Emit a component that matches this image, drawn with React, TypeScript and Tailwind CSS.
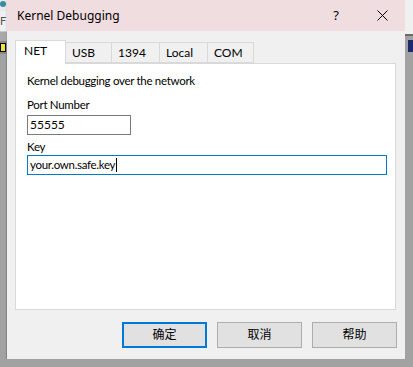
const tabs = [
  { label: 'USB', w: 'w-[46px]' },
  { label: '1394', w: 'w-[48px]' },
  { label: 'Local', w: 'w-[48px]' },
  { label: 'COM', w: 'w-[46px]' },
];

const body = "font-['Lato','Noto_Sans_CJK_SC',sans-serif]";

export default function App() {
  return (
    <div className={`w-[413px] h-[367px] bg-[#a2a2a2] overflow-hidden flex flex-col ${body} text-[12px] text-black`}>
      <div className="flex h-[359px]">
        {/* whatever window sits behind the dialog, left side */}
        <div className="w-[7px] flex flex-col">
          <div className="h-[11px] bg-[#e6ecee] flex items-start">
            <div className="w-[6px] h-[6px] mt-[1px] bg-[#3c8aa0] rounded-sm"></div>
          </div>
          <div className="h-[20px] bg-[#f0f0f0] text-[#555] text-[11px] leading-[20px] overflow-hidden">F</div>
          <div className="h-[1px] bg-[#c8c8c8]"></div>
          <div className="h-[9px] bg-[#a9a9a9]"></div>
          <div className="h-[13px] bg-[#8a8a8a] flex items-center">
            <div className="w-[6px] h-[9px] border border-black bg-[#f6e33a]"></div>
          </div>
          <div className="flex-1 bg-[#a2a2a2] border-r border-[#8d8d8d]"></div>
        </div>

        <div className="w-[398px] flex flex-col bg-[#f0f0f0] shadow-[1px_1px_3px_rgba(0,0,0,0.35)]">
          <div className="h-[31px] bg-[#f0dde0] flex items-center pl-[10px] pr-[17px] font-['Noto_Sans',sans-serif]">
            <span className="text-[12px]">Kernel Debugging</span>
            <span className="ml-auto mr-[38px] text-[13px]">?</span>
            <svg width="11" height="11" viewBox="0 0 11 11" className="block">
              <path d="M0.5 0.5L10.5 10.5M10.5 0.5L0.5 10.5" stroke="#000" strokeWidth="1" />
            </svg>
          </div>

          <div className="flex-1 flex flex-col px-[8px] pt-[9px] text-[11.5px] tracking-[-0.3px]">
            <div className="flex items-start h-[24px] relative z-10 text-[12px] tracking-normal">
              <div className="w-[51px] h-[24px] bg-white border border-b-0 border-[#d9d9d9] pl-[8px] leading-[20px]">
                NET
              </div>
              {tabs.map((t) => (
                <div
                  key={t.label}
                  className={`${t.w} h-[21px] mt-[2px] bg-[#f0f0f0] border border-l-0 border-[#d9d9d9] pl-[6px] leading-[20px]`}
                >
                  {t.label}
                </div>
              ))}
            </div>

            <div className="w-[381px] h-[247px] -mt-[1px] bg-white border border-[#d9d9d9] px-[11px] pt-[9px] flex flex-col">
              <div className="leading-[16px]">Kernel debugging over the network</div>
              <div className="leading-[16px] mt-[8px]">Port Number</div>
              <div className="w-[104px] h-[20px] mt-[2px] border border-[#7a7a7a] pl-[2px] leading-[18px] text-[12px] tracking-normal">55555</div>
              <div className="leading-[16px] mt-[4px]">Key</div>
              <div className="w-[360px] h-[20px] border border-[#0078d7] pl-[2px] leading-[18px] flex items-center">
                <span>your.own.safe.key</span>
                <span className="w-[1px] h-[14px] ml-[1px] bg-black"></span>
              </div>
            </div>

            <div className="flex justify-end gap-[10px] mt-[12px] tracking-normal">
              <button className="w-[85px] h-[26px] border-2 border-[#0078d7] bg-[#e1e1e1] text-[12px]">确定</button>
              <button className="w-[85px] h-[26px] border border-[#adadad] bg-[#e1e1e1] text-[12px]">取消</button>
              <button className="w-[85px] h-[26px] border border-[#adadad] bg-[#e1e1e1] text-[12px]">帮助</button>
            </div>
          </div>
        </div>

        {/* window behind, right side */}
        <div className="w-[8px] flex flex-col">
          <div className="h-[34px] bg-[#f0f0f0]"></div>
          <div className="h-[2px] bg-[#6a6a6a]"></div>
          <div className="h-[4px] bg-[#a2a2a2]"></div>
          <div className="h-[12px] flex">
            <div className="w-[3px] bg-[#a2a2a2]"></div>
            <div className="flex-1 bg-[#1c2a6e]"></div>
          </div>
          <div className="flex-1 bg-[#a2a2a2]"></div>
        </div>
      </div>
      <div className="flex-1 bg-[#a2a2a2]"></div>
    </div>
  );
}
